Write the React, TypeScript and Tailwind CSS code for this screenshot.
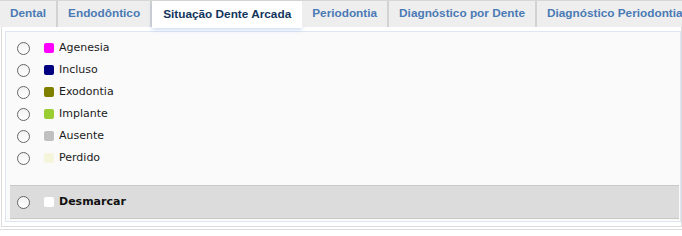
import React from 'react';

const tabs = [
  { label: 'Dental' },
  { label: 'Endodôntico' },
  { label: 'Situação Dente Arcada', active: true },
  { label: 'Periodontia' },
  { label: 'Diagnóstico por Dente' },
  { label: 'Diagnóstico Periodontia' },
];

const options = [
  { label: 'Agenesia', color: 'bg-[#ff00ff]' },
  { label: 'Incluso', color: 'bg-[#000080]' },
  { label: 'Exodontia', color: 'bg-[#808000]' },
  { label: 'Implante', color: 'bg-[#9acd32]' },
  { label: 'Ausente', color: 'bg-[#c0c0c0]' },
  { label: 'Perdido', color: 'bg-[#f5f5dc]' },
];

function Radio() {
  return (
    <span className="w-[13px] h-[13px] rounded-full border border-[#666] bg-gradient-to-b from-[#f2f2f2] to-white flex-shrink-0" />
  );
}

export default function App() {
  return (
    <div className="w-[682px] h-[236px] bg-white overflow-hidden" style={{ fontFamily: '"DejaVu Sans", Verdana, sans-serif' }}>
      {/* Tabs */}
      <div className="flex h-[27px] border-t border-[#d6d6d6] relative z-10 whitespace-nowrap">
        {tabs.map((t) =>
          t.active ? (
            <div
              key={t.label}
              className="h-[27px] px-[11px] flex items-center bg-white text-[#12355c] text-[11.8px] font-bold shadow-[0_2px_4px_rgba(120,160,220,0.35)]"
              style={{ fontFamily: '"Liberation Sans", Arial, sans-serif' }}
            >
              {t.label}
            </div>
          ) : (
            <div
              key={t.label}
              className="h-[26px] px-[10px] flex items-center bg-[#eeeeee] border-r-2 border-[#d2d2d2] text-[#4a7ab5] text-[11.8px] font-bold"
              style={{ fontFamily: '"Liberation Sans", Arial, sans-serif' }}
            >
              {t.label}
            </div>
          )
        )}
      </div>

      {/* Content */}
      <div className="-mt-[1px] ml-[1px] h-[201px] border border-[#dcdcdc] pt-[4px] pl-[3px] pb-[4px]">
        <div className="h-full border border-[#dde6f3] bg-[#fafafa] flex flex-col pt-[5px] pb-[2px]">
          <div className="flex flex-col pl-[11px]">
            {options.map((o) => (
              <div key={o.label} className="h-[22px] flex items-center">
                <Radio />
                <span className={`ml-[14px] w-[10px] h-[10px] rounded-[2px] ${o.color}`} />
                <span className="ml-[5px] text-[11px] text-[#1a1a1a]">{o.label}</span>
              </div>
            ))}
          </div>
          <div className="mt-auto ml-[4px] mr-[1px] h-[34px] bg-[#dcdcdc] border-t border-b border-[#c8c8c8] flex items-center pl-[7px]">
            <Radio />
            <span className="ml-[14px] w-[10px] h-[10px] rounded-[2px] bg-white" />
            <span className="ml-[5px] text-[11px] font-bold text-[#111]">Desmarcar</span>
          </div>
        </div>
      </div>
      <div className="mt-[2px] h-[1px] bg-[#dcdcdc]" />
    </div>
  );
}
